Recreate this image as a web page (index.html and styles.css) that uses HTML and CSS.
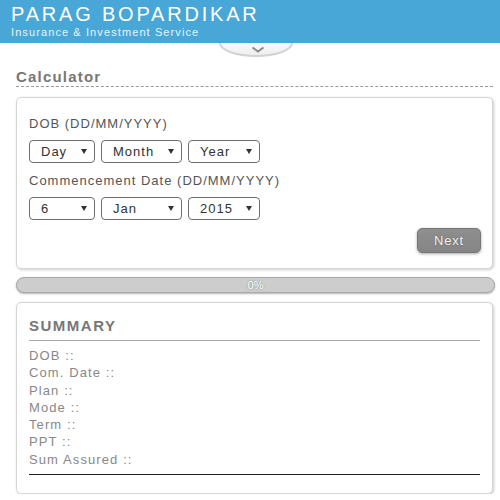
FILE: index.html
```html
<!DOCTYPE html>
<html lang="en">
<head>
    <meta charset="UTF-8">
    <meta name="viewport" content="width=device-width, initial-scale=1.0">
    <title>Parag Bopardikar - Calculator</title>
    <link rel="stylesheet" href="styles.css">
</head>
<body>
<!-- Header -->
<header class="topbar">
    <h1 class="brand">PARAG BOPARDIKAR</h1>
    <p class="tagline">Insurance &amp; Investment Service</p>
</header>

<div class="pull-tab">
    <svg width="14" height="7" viewBox="0 0 14 7"><polyline points="1.5,1.5 7,5.5 12.5,1.5" fill="none" stroke="#8a8a8a" stroke-width="2"/></svg>
</div>

<main class="content">
    <h2 class="section-title">Calculator</h2>

    <!-- Date inputs -->
    <div class="card calc">
        <div class="field-label">DOB (DD/MM/YYYY)</div>
        <div class="select-row">
            <div class="select w-day"><span>Day</span><i class="caret"></i></div>
            <div class="select w-month"><span>Month</span><i class="caret"></i></div>
            <div class="select w-year"><span>Year</span><i class="caret"></i></div>
        </div>

        <div class="field-label">Commencement Date (DD/MM/YYYY)</div>
        <div class="select-row last">
            <div class="select w-day"><span>6</span><i class="caret"></i></div>
            <div class="select w-month"><span>Jan</span><i class="caret"></i></div>
            <div class="select w-year"><span>2015</span><i class="caret"></i></div>
        </div>

        <div class="actions">
            <button type="button" class="btn-next">Next</button>
        </div>
    </div>

    <div class="progress"><span>0%</span></div>

    <!-- Summary -->
    <div class="card summary">
        <h3 class="summary-title">SUMMARY</h3>
        <ul class="summary-list">
            <li>DOB ::</li>
            <li>Com. Date ::</li>
            <li>Plan ::</li>
            <li>Mode ::</li>
            <li>Term ::</li>
            <li>PPT ::</li>
            <li>Sum Assured ::</li>
        </ul>
    </div>
</main>
</body>
</html>
```
FILE: styles.css
```css
/* General */
body {
    margin: 0;
    background: #fff;
    font-family: "Liberation Sans", Arial, sans-serif;
    color: #555;
}

/* Header */
.topbar {
    background: #48a7d6;
    height: 43px;
    padding: 3px 11px 0;
    box-sizing: border-box;
}

.brand {
    margin: 0;
    font-size: 20px;
    line-height: 22px;
    font-weight: normal;
    letter-spacing: 2.8px;
    color: #fff;
}

.tagline {
    margin: 1px 0 0;
    font-size: 11px;
    line-height: 12px;
    letter-spacing: 1.1px;
    color: #e8f4fb;
}

.pull-tab {
    width: 74px;
    height: 14px;
    margin-left: 219px;
    border: 2px solid #d2d2d2;
    border-top: none;
    border-radius: 0 0 50% 50% / 0 0 100% 100%;
    background: linear-gradient(#fafafa, #eee);
    display: flex;
    justify-content: center;
    align-items: flex-end;
    padding-bottom: 2px;
    box-sizing: border-box;
}

.pull-tab svg {
    display: block;
    margin-left: 4px;
}

/* Content */
.content {
    padding: 0 7px 0 16px;
}

.section-title {
    margin: 11px 0 0;
    padding-bottom: 0;
    font-size: 15px;
    line-height: 18px;
    letter-spacing: 1.2px;
    color: #777;
    border-bottom: 1px dashed #999;
}

.card {
    background: #fff;
    border: 1px solid #d6d6d6;
    border-radius: 5px;
    box-shadow: 1px 1px 3px rgba(0, 0, 0, 0.2);
}

.calc {
    margin-top: 10px;
    padding: 18px 12px 15px;
}

.field-label {
    font-size: 13px;
    line-height: 16px;
    letter-spacing: 1px;
}

.select-row {
    display: flex;
    gap: 6px;
    margin: 8px 0 10px;
}

.select-row.last {
    margin-bottom: 8px;
}

.select {
    height: 23px;
    box-sizing: border-box;
    border: 1px solid #6e6e6e;
    border-radius: 4px;
    background: #fff;
    display: flex;
    align-items: center;
    justify-content: space-between;
    padding: 0 7px 0 11px;
    font-size: 13px;
    letter-spacing: 1px;
    color: #333;
}

.w-day { width: 66px; }
.w-month { width: 81px; }
.w-year { width: 72px; }

.caret {
    width: 0;
    height: 0;
    border-left: 3.5px solid transparent;
    border-right: 3.5px solid transparent;
    border-top: 5px solid #333;
}

.actions {
    display: flex;
    justify-content: flex-end;
    margin-right: -1px;
}

.btn-next {
    width: 64px;
    height: 25px;
    border: 1px solid #767676;
    border-radius: 5px;
    background: linear-gradient(#8f8f8f, #858585);
    box-shadow: 0 1px 3px rgba(0, 0, 0, 0.35);
    color: #eee;
    font-family: "Liberation Sans", Arial, sans-serif;
    font-size: 13px;
    letter-spacing: 0.8px;
    text-shadow: 0 0 2px #666;
    padding: 0;
}

/* Progress bar */
.progress {
    margin: 8px -2px 9px 0;
    height: 16px;
    box-sizing: border-box;
    border: 1px solid #a9a9a9;
    border-radius: 8px;
    background: #cdcdcd;
    box-shadow: 0 1px 2px rgba(0, 0, 0, 0.3);
    display: flex;
    align-items: center;
    justify-content: center;
    font-size: 11px;
    color: #fff;
    text-shadow: 0 0 2px #777;
}

/* Summary */
.summary {
    padding: 14px 12px 18px;
}

.summary-title {
    margin: 0;
    padding-bottom: 5px;
    font-size: 15px;
    line-height: 18px;
    letter-spacing: 1.5px;
    color: #777;
    border-bottom: 1px solid #aaa;
}

.summary-list {
    list-style: none;
    margin: 6px 0 0;
    padding: 0 0 6px;
    font-size: 13px;
    line-height: 17.3px;
    letter-spacing: 1.1px;
    color: #888;
    border-bottom: 1px solid #222;
}
```
